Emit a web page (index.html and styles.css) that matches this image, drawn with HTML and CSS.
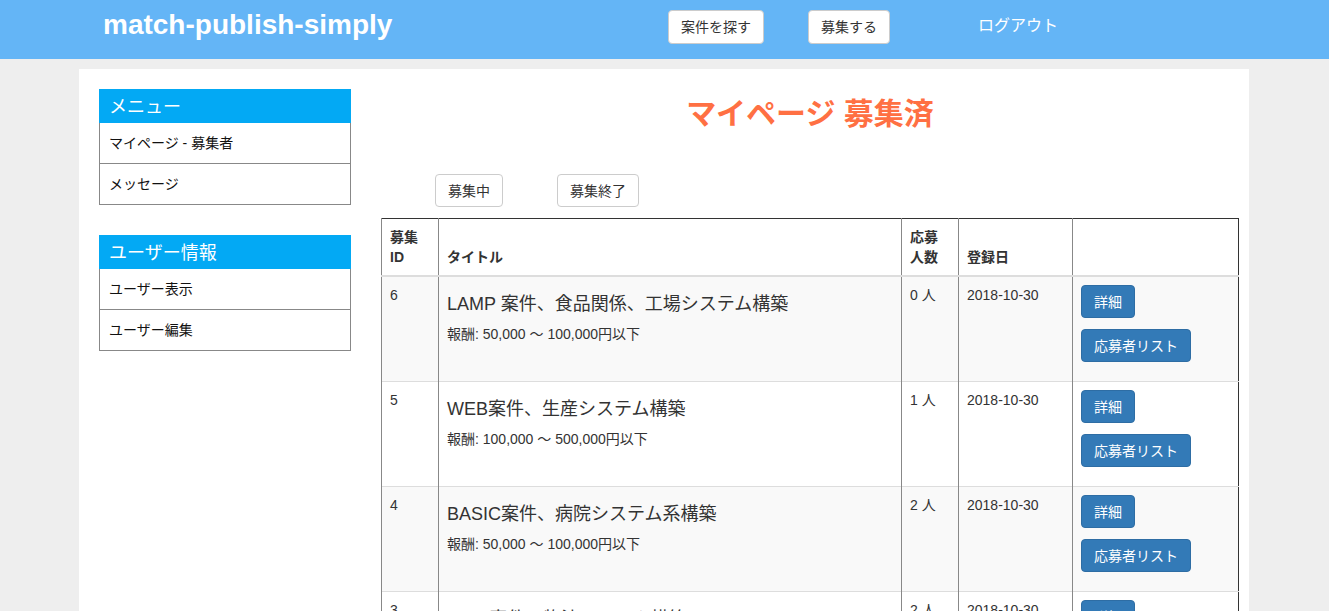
FILE: index.html
```html
<!DOCTYPE html>
<html lang="ja">
<head>
<meta charset="utf-8">
<title>match-publish-simply</title>
<link rel="stylesheet" href="styles.css">
</head>
<body>
<header class="topbar">
  <div class="topbar-inner">
    <div class="brand">match-publish-simply</div>
    <nav class="topnav">
      <a class="btn btn-default nav-btn">案件を探す</a>
      <a class="btn btn-default nav-btn">募集する</a>
      <a class="nav-link">ログアウト</a>
    </nav>
  </div>
</header>
<div class="page">
  <aside class="sidebar">
    <div class="side-box">
      <div class="side-head">メニュー</div>
      <div class="side-item">マイページ - 募集者</div>
      <div class="side-item">メッセージ</div>
    </div>
    <div class="side-box">
      <div class="side-head">ユーザー情報</div>
      <div class="side-item">ユーザー表示</div>
      <div class="side-item">ユーザー編集</div>
    </div>
  </aside>
  <main class="main">
    <h1 class="page-title">マイページ 募集済</h1>
    <div class="tabs">
      <a class="btn btn-default">募集中</a>
      <a class="btn btn-default">募集終了</a>
    </div>
    <table class="list">
      <colgroup>
        <col class="c-id"><col class="c-title"><col class="c-num"><col class="c-date"><col class="c-act">
      </colgroup>
      <thead>
        <tr><th>募集<br>ID</th><th>タイトル</th><th>応募<br>人数</th><th>登録日</th><th></th></tr>
      </thead>
      <tbody>
        <tr>
          <td>6</td>
          <td><div class="job-title">LAMP 案件、食品関係、工場システム構築</div><div class="reward">報酬: 50,000 〜 100,000円以下</div></td>
          <td>0 人</td>
          <td>2018-10-30</td>
          <td><div class="actions"><a class="btn btn-primary">詳細</a><a class="btn btn-primary">応募者リスト</a></div></td>
        </tr>
        <tr>
          <td>5</td>
          <td><div class="job-title">WEB案件、生産システム構築</div><div class="reward">報酬: 100,000 〜 500,000円以下</div></td>
          <td>1 人</td>
          <td>2018-10-30</td>
          <td><div class="actions"><a class="btn btn-primary">詳細</a><a class="btn btn-primary">応募者リスト</a></div></td>
        </tr>
        <tr>
          <td>4</td>
          <td><div class="job-title">BASIC案件、病院システム系構築</div><div class="reward">報酬: 50,000 〜 100,000円以下</div></td>
          <td>2 人</td>
          <td>2018-10-30</td>
          <td><div class="actions"><a class="btn btn-primary">詳細</a><a class="btn btn-primary">応募者リスト</a></div></td>
        </tr>
        <tr>
          <td>3</td>
          <td><div class="job-title">JAVA案件、物流システム構築</div><div class="reward">報酬: 50,000 〜 100,000円以下</div></td>
          <td>2 人</td>
          <td>2018-10-30</td>
          <td><div class="actions"><a class="btn btn-primary">詳細</a><a class="btn btn-primary">応募者リスト</a></div></td>
        </tr>
      </tbody>
    </table>
  </main>
</div>
</body>
</html>
```
FILE: styles.css
```css
* { box-sizing: border-box; }
html, body { margin: 0; padding: 0; }
body {
  background: #eeeeee;
  font-family: "Liberation Sans", "Noto Sans CJK JP", sans-serif;
  font-size: 14px;
  line-height: 20px;
  color: #333;
  overflow: hidden;
}
.topbar {
  background: #64b5f6;
  height: 59px;
}
.topbar-inner {
  display: flex;
  align-items: center;
  height: 59px;
  padding-left: 103px;
}
.brand {
  color: #fff;
  font-weight: bold;
  font-size: 28px;
  line-height: 32px;
  margin-top: -10px;
  width: 565px;
}
.topnav {
  display: flex;
  align-items: center;
  margin-top: -5px;
}
.btn {
  display: inline-block;
  padding: 6px 12px;
  font-size: 14px;
  line-height: 20px;
  border: 1px solid transparent;
  border-radius: 4px;
  white-space: nowrap;
  cursor: pointer;
}
.btn-default {
  background: #fff;
  color: #333;
  border-color: #ccc;
}
.btn-primary {
  background: #337ab7;
  border-color: #2e6da4;
  color: #fff;
}
.nav-btn { margin-right: 44px; }
.nav-btn + .nav-btn { margin-right: 88px; }
.nav-link {
  color: #fff;
  font-size: 16px;
  margin-top: -2px;
}
.page {
  width: 1170px;
  margin: 10px 0 0 79px;
  background: #fff;
  display: flex;
  padding: 20px 11px 40px 20px;
  min-height: 600px;
}
.sidebar {
  width: 252px;
  flex: none;
  margin-right: 30px;
}
.side-box {
  margin-bottom: 30px;
}
.side-head {
  background: #03a9f4;
  color: #fff;
  font-size: 18px;
  height: 34px;
  line-height: 37px;
  padding-left: 10px;
}
.side-item {
  border: 1px solid #888;
  border-top: none;
  height: 41px;
  padding: 10px 9px;
  color: #111;
}
.main {
  flex: 1;
}
.page-title {
  margin: 7px 0 0;
  text-align: center;
  color: #ff7043;
  font-size: 30px;
  line-height: 36px;
  font-weight: bold;
}
.tabs {
  margin-top: 42px;
  padding-left: 54px;
  display: flex;
  gap: 54px;
}
.tabs .btn { height: 33px; }
.list {
  margin-top: 11px;
  width: 857px;
  border-collapse: collapse;
  border: 1px solid #333;
  table-layout: fixed;
}
.c-id { width: 57px; }
.c-title { width: 463px; }
.c-num { width: 57px; }
.c-date { width: 114px; }
.c-act { width: 166px; }
.list th, .list td {
  border-left: 1px solid #888;
  padding: 8px;
  text-align: left;
}
.list th {
  vertical-align: bottom;
  font-weight: bold;
  border-bottom: 2px solid #ddd;
  font-size: 14px;
}
.list td {
  vertical-align: top;
  border-top: 1px solid #ddd;
  height: 105px;
  font-size: 14px;
}
.list tbody tr:nth-child(odd) td { background: #f9f9f9; }
.list tbody tr:first-child td { border-top: none; }
.job-title {
  font-size: 18px;
  line-height: 26px;
  margin-top: 6px;
  color: #333;
}
.reward {
  margin-top: 7px;
  font-size: 14px;
  color: #333;
}
.actions {
  display: flex;
  flex-direction: column;
  align-items: flex-start;
  gap: 11px;
}
.actions .btn { height: 33px; }
```
